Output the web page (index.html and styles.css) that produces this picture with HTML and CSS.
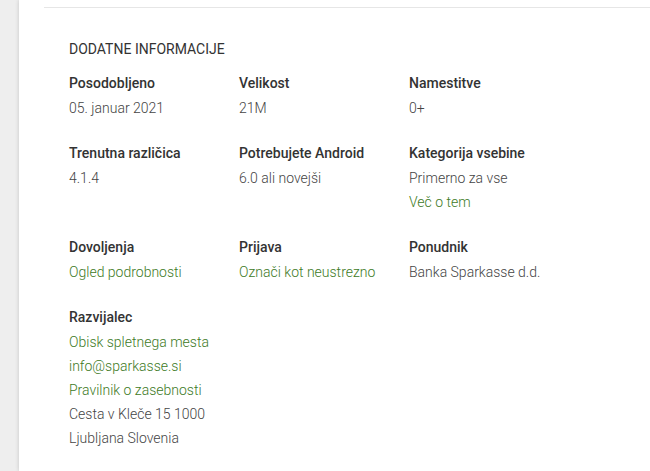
FILE: index.html
```html
<!DOCTYPE html>
<html lang="sl">
<head>
    <meta charset="UTF-8">
    <meta name="viewport" content="width=device-width, initial-scale=1.0">
    <title>Dodatne informacije</title>
    <link rel="stylesheet" href="styles.css">
</head>
<body>
    <div class="side"></div>
    <div class="main">
        <div class="info-section">
            <h3 class="info-title">DODATNE INFORMACIJE</h3>
            <div class="info-grid">
                <div class="info-item">
                    <div class="info-label">Posodobljeno</div>
                    <div class="info-value">05. januar 2021</div>
                </div>
                <div class="info-item">
                    <div class="info-label">Velikost</div>
                    <div class="info-value">21M</div>
                </div>
                <div class="info-item">
                    <div class="info-label">Namestitve</div>
                    <div class="info-value">0+</div>
                </div>

                <div class="info-item">
                    <div class="info-label">Trenutna različica</div>
                    <div class="info-value">4.1.4</div>
                </div>
                <div class="info-item">
                    <div class="info-label">Potrebujete Android</div>
                    <div class="info-value">6.0 ali novejši</div>
                </div>
                <div class="info-item">
                    <div class="info-label">Kategorija vsebine</div>
                    <div class="info-value">Primerno za vse</div>
                    <a href="#" class="info-link">Več o tem</a>
                </div>

                <div class="info-item">
                    <div class="info-label">Dovoljenja</div>
                    <a href="#" class="info-link">Ogled podrobnosti</a>
                </div>
                <div class="info-item">
                    <div class="info-label">Prijava</div>
                    <a href="#" class="info-link">Označi kot neustrezno</a>
                </div>
                <div class="info-item">
                    <div class="info-label">Ponudnik</div>
                    <div class="info-value">Banka Sparkasse d.d.</div>
                </div>

                <div class="info-item">
                    <div class="info-label">Razvijalec</div>
                    <a href="#" class="info-link">Obisk spletnega mesta</a>
                    <a href="#" class="info-link">info@sparkasse.si</a>
                    <a href="#" class="info-link">Pravilnik o zasebnosti</a>
                    <div class="info-value">Cesta v Kleče 15 1000</div>
                    <div class="info-value">Ljubljana Slovenia</div>
                </div>
            </div>
        </div>
    </div>
</body>
</html>
```

FILE: styles.css
```css
html, body {
    height: 100%;
}
body {
    font-family: Roboto, 'Liberation Sans', sans-serif;
    margin: 0;
    padding: 0;
    display: flex;
    background-color: #eeeeee;
    overflow: hidden;
}
.side {
    width: 19px;
    flex-shrink: 0;
}
.main {
    flex: 1;
    background-color: #ffffff;
    box-shadow: 0 0 4px rgba(0, 0, 0, 0.18);
}
.info-section {
    margin: 7px 0 0 25px;
    border-top: 1px solid #e6e6e6;
    padding: 29px 0 0 25px;
}
.info-title {
    margin: 0 0 10px;
    font-size: 14px;
    font-weight: 400;
    line-height: 24px;
    color: #333;
}
.info-grid {
    display: grid;
    grid-template-columns: repeat(3, 170px);
    row-gap: 21px;
}
.info-item {
    display: flex;
    flex-direction: column;
    align-items: flex-start;
}
.info-label {
    font-size: 14px;
    font-weight: 500;
    line-height: 24px;
    color: #333;
    margin-bottom: 1px;
}
.info-value {
    font-size: 14px;
    font-weight: 300;
    line-height: 24px;
    color: #444;
}
.info-link {
    font-size: 14px;
    font-weight: 300;
    line-height: 24px;
    color: #3d7a25;
    text-decoration: none;
}
```
